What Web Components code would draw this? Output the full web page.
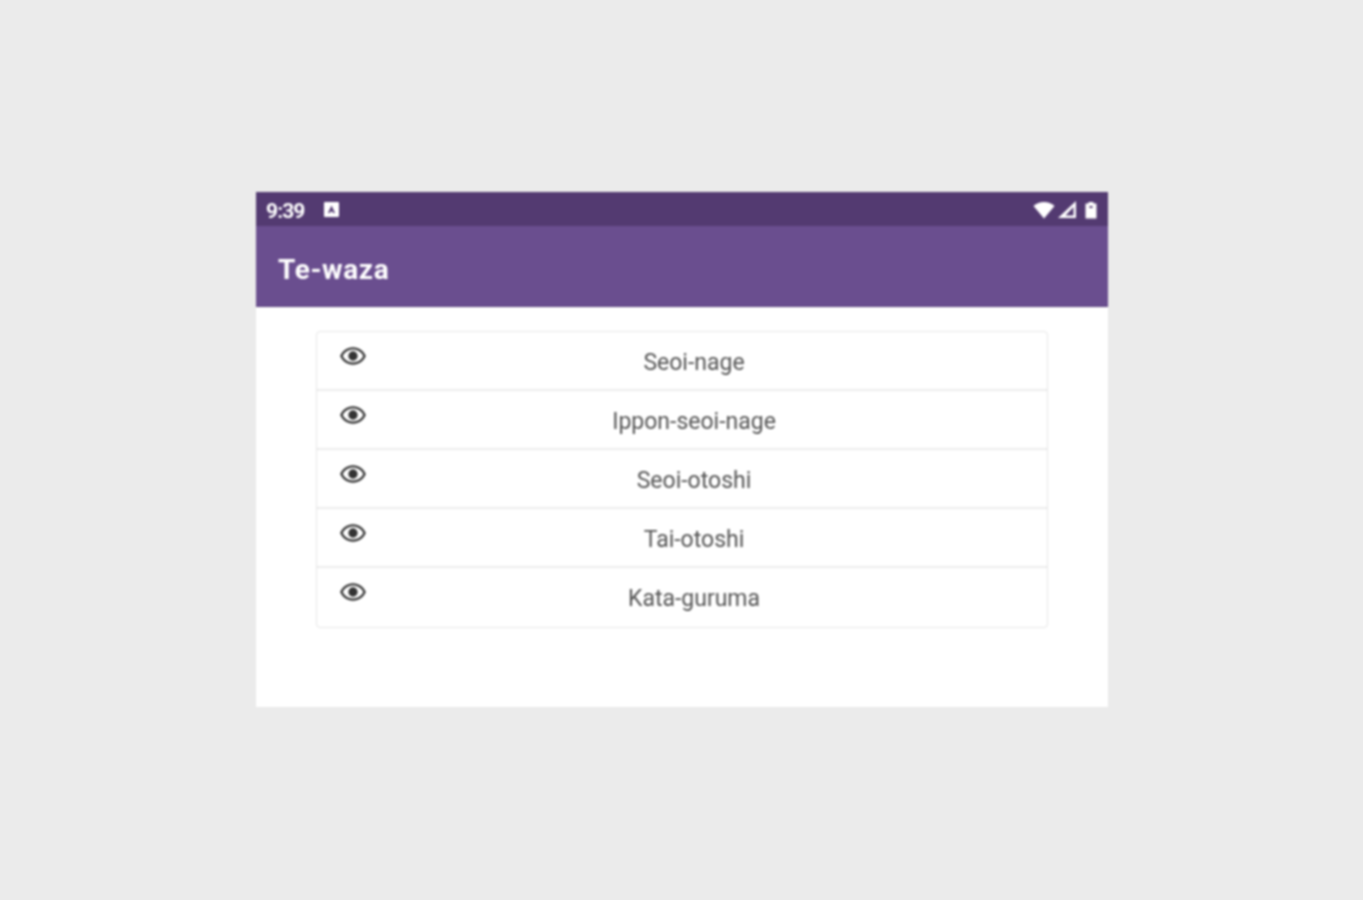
<!DOCTYPE html>
<html lang="en"><head><meta charset="utf-8"><title>Te-waza</title>
<style>
html,body{margin:0;height:100%;background:#ebebeb}
body{padding:192px 0 0 256px;box-sizing:border-box;height:900px;overflow:hidden;font-family:Roboto,"Liberation Sans",sans-serif}
</style></head><body>
<phone-frame>
<status-bar></status-bar>
<app-bar>Te-waza</app-bar>
<waza-list>
<waza-row>Seoi-nage</waza-row>
<waza-row>Ippon-seoi-nage</waza-row>
<waza-row>Seoi-otoshi</waza-row>
<waza-row>Tai-otoshi</waza-row>
<waza-row>Kata-guruma</waza-row>
</waza-list>
</phone-frame>
<script>
function def(name,html){customElements.define(name,class extends HTMLElement{constructor(){super();this.attachShadow({mode:'open'}).innerHTML=html}})}
def('phone-frame',`<style>:host{display:flex;flex-direction:column;width:852px;height:515px;background:#fff;filter:blur(.8px)}</style><slot></slot>`);
def('status-bar',`<style>:host{display:flex;align-items:center;height:34px;background:#533a71;color:#fff;padding:0 10px 0 10px;box-sizing:border-box;font:700 21px/34px Roboto,sans-serif;letter-spacing:-.9px}
.t{width:58px;padding-top:3px}.sp{flex:1}svg{display:block}.r{display:flex;align-items:center;gap:0;padding-top:1px}.a{margin-top:1px}</style>
<span class="t">9:39</span>
<svg class="a" width="15" height="15" viewBox="0 0 15 15"><path fill="#fff" fill-rule="evenodd" d="M1 0h13a1 1 0 0 1 1 1v13a1 1 0 0 1-1 1H1a1 1 0 0 1-1-1V1a1 1 0 0 1 1-1zM7.500 3.500 4 11h2l.6-1.500h1.800L9 11h2z"/></svg>
<span class="sp"></span>
<span class="r">
<svg width="22" height="18" viewBox="0 0 22 18"><path fill="#fff" d="M11 17.500 .5 5C3.500 2.300 7 1 11 1s7.500 1.300 10.500 4z"/></svg>
<svg width="20" height="18" viewBox="0 0 20 18" style="margin-left:2px"><path fill="#fff" fill-rule="evenodd" d="M19 0v17H1zM16.500 6l-8 8.500h8z"/></svg>
<svg width="14" height="18" viewBox="0 0 14 18" style="margin-left:7px"><path fill="#fff" fill-rule="evenodd" d="M4.500 1h5v1.500h3V17.500h-11V2.500h3zM5.500 5v2h3V5z"/></svg>
</span>`);
def('app-bar',`<style>:host{display:flex;align-items:center;height:81px;background:#6a4e8f;color:#fff;padding:7px 0 0 22px;box-sizing:border-box;font:700 28px/1 Roboto,sans-serif;letter-spacing:.6px;border-bottom:1px solid #5d4480}</style><slot></slot>`);
def('waza-list',`<style>:host{display:block;width:732px;margin:24px 0 0 60px;box-sizing:border-box;border:1px solid #e6e6e6;border-radius:4px;background:#fff}</style><slot></slot>`);
def('waza-row',`<style>:host{display:flex;height:59px;box-sizing:border-box;border-bottom:2px solid #ececec;color:#555;font:400 23px/58px Roboto,sans-serif}
:host(:last-child){border-bottom:0}
.i{width:52px;padding:10px 0 0 22px;box-sizing:border-box;flex:none;height:100%}svg{display:block}
.l{flex:1;text-align:center;margin-right:28px;line-height:62px}</style>
<span class="i"><svg width="28" height="28" viewBox="0 0 24 24"><path fill="#333" d="M12 4.500C7 4.500 2.730 7.610 1 12c1.730 4.390 6 7.500 11 7.500s9.270-3.110 11-7.500c-1.730-4.390-6-7.500-11-7.500zM12 17.500c-3.800 0-7.200-2.100-8.800-5.500 1.600-3.400 5-5.500 8.800-5.500s7.200 2.100 8.800 5.500c-1.600 3.400-5 5.500-8.800 5.500zM12 8a4 4 0 1 0 0 8 4 4 0 0 0 0-8z"/></svg></span>
<span class="l"><slot></slot></span>`);
</script>
</body></html>
